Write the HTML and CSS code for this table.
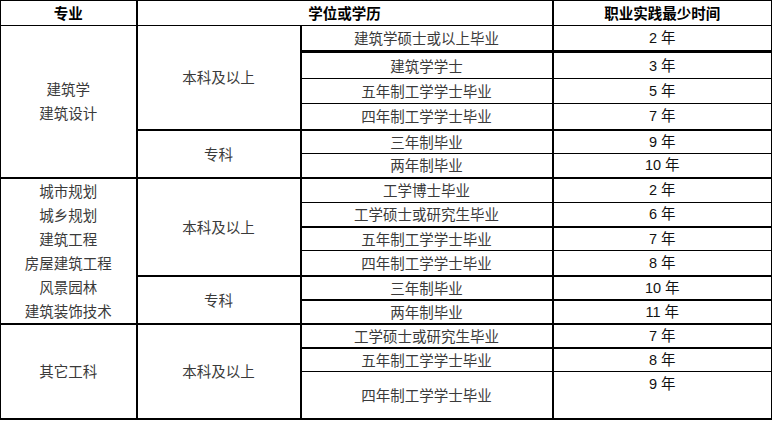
FILE: index.html
```html
<!DOCTYPE html>
<html lang="zh-CN">
<head>
<meta charset="utf-8">
<title>职业实践最少时间</title>
<link rel="stylesheet" href="styles.css">
</head>
<body>
<table class="req">
  <colgroup><col class="c1"><col class="c2"><col class="c3"><col class="c4"></colgroup>
  <thead>
    <tr class="h25"><th>专业</th><th colspan="2">学位或学历</th><th>职业实践最少时间</th></tr>
  </thead>
  <tbody>
    <tr class="h26">
      <td rowspan="6" class="major bb2">建筑学<br>建筑设计</td>
      <td rowspan="4" class="lvl bb2">本科及以上</td>
      <td class="deg bb3">建筑学硕士或以上毕业</td><td class="yr bb3">2 年</td>
    </tr>
    <tr class="h27"><td class="deg">建筑学学士</td><td class="yr">3 年</td></tr>
    <tr class="h25"><td class="deg">五年制工学学士毕业</td><td class="yr">5 年</td></tr>
    <tr class="h26"><td class="deg bb2">四年制工学学士毕业</td><td class="yr bb2">7 年</td></tr>
    <tr class="h24">
      <td rowspan="2" class="lvl bb2">专科</td>
      <td class="deg">三年制毕业</td><td class="yr">9 年</td>
    </tr>
    <tr class="h24"><td class="deg bb2">两年制毕业</td><td class="yr bb2">10 年</td></tr>
    <tr class="h25">
      <td rowspan="6" class="major bb2">城市规划<br>城乡规划<br>建筑工程<br>房屋建筑工程<br>风景园林<br>建筑装饰技术</td>
      <td rowspan="4" class="lvl bb2">本科及以上</td>
      <td class="deg">工学博士毕业</td><td class="yr">2 年</td>
    </tr>
    <tr class="h24"><td class="deg bb2">工学硕士或研究生毕业</td><td class="yr bb2">6 年</td></tr>
    <tr class="h24"><td class="deg">五年制工学学士毕业</td><td class="yr">7 年</td></tr>
    <tr class="h25"><td class="deg bb2">四年制工学学士毕业</td><td class="yr bb2">8 年</td></tr>
    <tr class="h24">
      <td rowspan="2" class="lvl bb2">专科</td>
      <td class="deg bb2">三年制毕业</td><td class="yr bb2">10 年</td>
    </tr>
    <tr class="h24"><td class="deg bb2">两年制毕业</td><td class="yr bb2">11 年</td></tr>
    <tr class="h24">
      <td rowspan="3" class="major">其它工科</td>
      <td rowspan="3" class="lvl">本科及以上</td>
      <td class="deg bb2">工学硕士或研究生毕业</td><td class="yr bb2">7 年</td>
    </tr>
    <tr class="h24"><td class="deg">五年制工学学士毕业</td><td class="yr">8 年</td></tr>
    <tr class="h47"><td class="deg">四年制工学学士毕业</td><td class="yr top">9 年</td></tr>
  </tbody>
</table>
</body>
</html>
```

FILE: styles.css
```css
html, body {
  margin: 0;
  padding: 0;
  background: #fff;
}

.req {
  border-collapse: collapse;
  table-layout: fixed;
  width: 771px;
  font-family: "Noto Sans CJK SC", sans-serif;
  font-size: 14.5px;
  color: #3a3a3a;
  border: 1px solid #000;
  border-bottom-width: 2px;
}

.c1 { width: 136px; }
.c2 { width: 164px; }
.c3 { width: 252px; }
.c4 { width: 219px; }

.req th,
.req td {
  border: 1px solid #000;
  padding: 0;
  text-align: center;
  vertical-align: middle;
  line-height: 18px;
  white-space: nowrap;
}

.req th {
  font-weight: 700;
  color: #000;
  font-size: 14.5px;
}

.req th + th,
.req td.lvl,
.req td.deg,
.req td.yr {
  border-left-width: 2px;
}

.req td.major {
  line-height: 24px;
}

.req td.yr {
  font-family: "Liberation Sans", "Noto Sans CJK SC", sans-serif;
  font-size: 14.5px;
  color: #111;
}

.req td.yr.top {
  vertical-align: top;
  padding-top: 3px;
}

.req .bb2 { border-bottom-width: 2px; }
.req .bb3 { border-bottom-width: 3px; }

.h24 { height: 24px; }
.h25 { height: 25px; }
.h26 { height: 26px; }
.h27 { height: 27px; }
.h47 { height: 47px; }
```
